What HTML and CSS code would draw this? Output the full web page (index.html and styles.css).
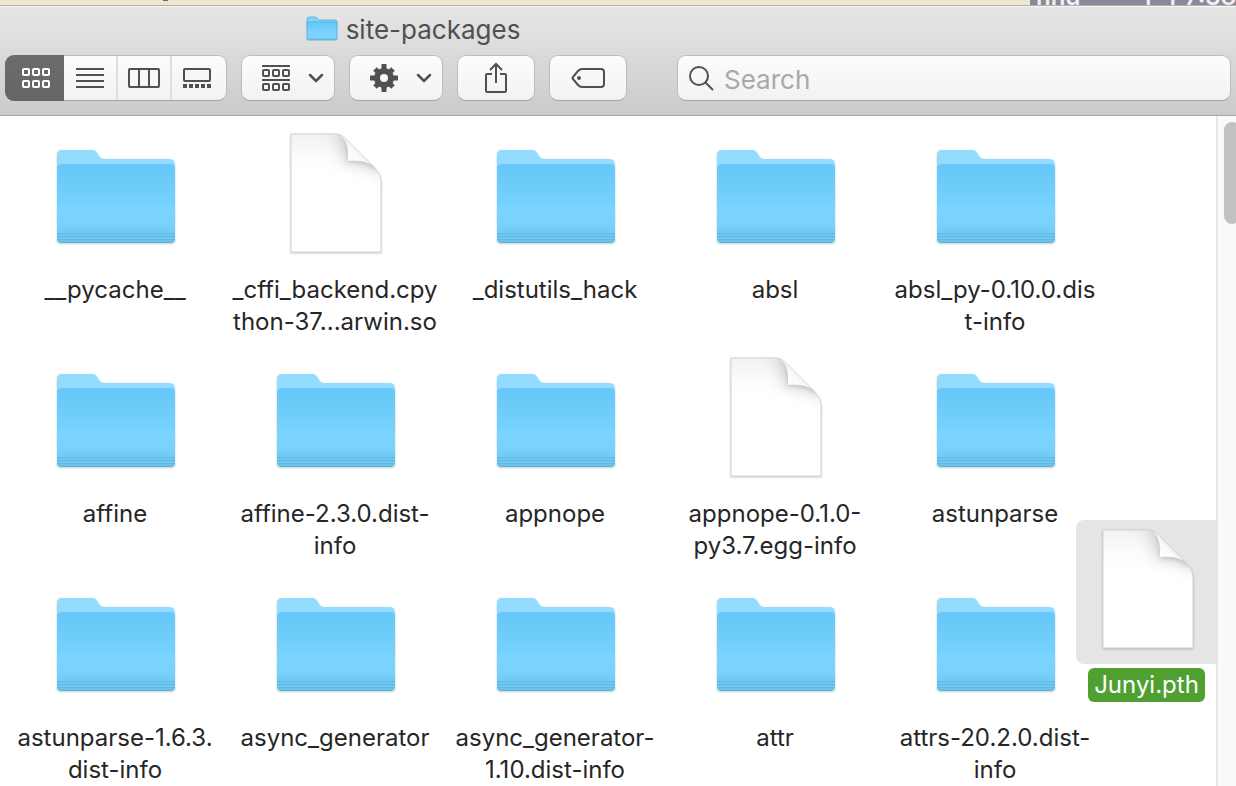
FILE: index.html
```
<!DOCTYPE html>
<html lang="en">
<head>
<meta charset="utf-8">
<title>site-packages</title>
<link rel="stylesheet" href="styles.css">
</head>
<body>
<svg class="defs" aria-hidden="true">
  <defs>
    <linearGradient id="front" x1="0" y1="0" x2="0" y2="1">
      <stop offset="0" stop-color="#64c7f8"/>
      <stop offset=".65" stop-color="#7bd4fd"/>
      <stop offset=".78" stop-color="#79d1fa"/>
      <stop offset=".87" stop-color="#70c9f3"/>
      <stop offset="1" stop-color="#6ac3ed"/>
    </linearGradient>
    <linearGradient id="paper" x1="0" y1="0" x2="0" y2="1">
      <stop offset="0" stop-color="#f1f1f1"/>
      <stop offset=".2" stop-color="#fcfcfc"/>
      <stop offset=".35" stop-color="#fff"/>
    </linearGradient>
    <linearGradient id="curl" gradientUnits="userSpaceOnUse" x1="58" y1="28" x2="71" y2="15">
      <stop offset="0" stop-color="#fff"/>
      <stop offset=".6" stop-color="#fafafa"/>
      <stop offset="1" stop-color="#e4e4e4"/>
    </linearGradient>
    <clipPath id="page-shape"><path d="M1 1h43c6 0 9 2 13 6l25 25c6 6 9 10 9 18v69H1z"/></clipPath>
    <filter id="wide-blur" x="-100%" y="-100%" width="300%" height="300%"><feGaussianBlur stdDeviation="8"/></filter>
    <filter id="near-blur" x="-50%" y="-50%" width="200%" height="200%"><feGaussianBlur stdDeviation="2"/></filter>
  </defs>
  <symbol id="folder" viewBox="0 0 120 96">
    <path d="M1 6q0-5 5-5h31c5 0 5 9 11 9h66q5 0 5 6v30H1z" fill="#93dcff"/>
    <path d="M1 20q0-5 5-5h108q5 0 5 5v70q0 4-4 4H5q-4 0-4-4z" fill="url(#front)"/>
    <path d="M1 84.500h118M1 87.500h118M1 90.500h118" stroke="#5fb9e5" stroke-width="1"/>
    <path d="M4 93.500h112" stroke="#58b0da"/>
  </symbol>
  <symbol id="document" viewBox="0 0 92 120">
    <g clip-path="url(#page-shape)">
      <path d="M0 0h92v120H0z" fill="url(#paper)"/>
      <path d="M38-4c14 4 16 14 17 34 16-2 28 2 40 14V-4z" fill="#b5b5b5" opacity=".7" filter="url(#wide-blur)"/>
      <path d="M50 2c8 5 8 14 8 27 12-1 20 1 29 8V2z" fill="#b0b0b0" opacity=".7" filter="url(#near-blur)"/>
    </g>
    <path d="M1 1h43c6 0 9 2 13 6l25 25c6 6 9 10 9 18v69H1z" fill="none" stroke="#d3d3d3"/>
    <path d="M50 3c8 5 8 12 8 25 10-1 17 0 24 4L57 7q-3-3-7-4z" fill="url(#curl)"/>
  </symbol>
  <symbol id="chevron" viewBox="0 0 16 10"><path d="M2 2l6 6 6-6" fill="none" stroke="#505050" stroke-width="2.500" stroke-linecap="round"/></symbol>
</svg>

<div class="desktop">
  <span class="desktop-mark"></span>
  <div class="desktop-window"><span>hhd</span><span lang="zh">下午7:38</span></div>
</div>

<main class="finder">
  <header class="toolbar">
    <h1 class="title"><svg class="title-icon" viewBox="0 0 32 26">
      <path d="M1 3q0-2 2-2h7l3 3h16q2 0 2 2v5H1z" fill="#82d2f8" stroke="#61b6e3"/>
      <path d="M1 6h30v17q0 1-1 1H2q-1 0-1-1z" fill="url(#front)" stroke="#5cb5e2"/>
      <path d="M2 21h28" stroke="#8ed9fb"/></svg>site-packages</h1>
    <div class="controls">
      <div class="segments" role="group" aria-label="View">
        <button class="segment active" aria-label="Icons"><svg width="28" height="20" viewBox="0 0 28 20" fill="none" stroke="#fff" stroke-width="2"><rect x="1" y="1" width="6" height="6" rx="1"/><rect x="11" y="1" width="6" height="6" rx="1"/><rect x="21" y="1" width="6" height="6" rx="1"/><rect x="1" y="13" width="6" height="6" rx="1"/><rect x="11" y="13" width="6" height="6" rx="1"/><rect x="21" y="13" width="6" height="6" rx="1"/></svg></button>
        <button class="segment" aria-label="List"><svg width="28" height="20" viewBox="0 0 28 20" stroke="#505050" stroke-width="2"><path d="M0 1h28M0 7h28M0 13h28M0 19h28"/></svg></button>
        <button class="segment divided" aria-label="Columns"><svg width="32" height="20" viewBox="0 0 32 20" fill="none" stroke="#505050" stroke-width="2"><rect x="1" y="1" width="30" height="18" rx="1"/><path d="M11 1v18M21 1v18"/></svg></button>
        <button class="segment divided last" aria-label="Gallery"><svg width="28" height="20" viewBox="0 0 28 20" fill="none" stroke="#505050" stroke-width="2"><rect x="1" y="1" width="26" height="12" rx="1"/><path stroke-width="4" d="M0 18h4M6 18h4M12 18h4M18 18h4M24 18h4"/></svg></button>
      </div>
      <button class="tool menu" aria-label="Group by"><svg width="28" height="26" viewBox="0 0 28 26" fill="none" stroke="#505050" stroke-width="2"><path d="M0 1h28M0 15h28"/><rect x="1" y="5" width="6" height="6" rx="1"/><rect x="11" y="5" width="6" height="6" rx="1"/><rect x="21" y="5" width="6" height="6" rx="1"/><rect x="1" y="19" width="6" height="6" rx="1"/><rect x="11" y="19" width="6" height="6" rx="1"/><rect x="21" y="19" width="6" height="6" rx="1"/></svg><svg class="chevron"><use href="#chevron"/></svg></button>
      <button class="tool menu" aria-label="Actions"><svg width="28" height="28" viewBox="-14 -14 28 28"><circle r="7" fill="none" stroke="#505050" stroke-width="6"/><g stroke="#505050" stroke-width="5"><path d="M0-14v5M0 14v-5M-14 0h5M14 0h-5"/><path d="M-9-9l4 4M9-9l-4 4M-9 9l4-4M9 9l-4-4"/></g></svg><svg class="chevron"><use href="#chevron"/></svg></button>
      <button class="tool" aria-label="Share"><svg width="24" height="32" viewBox="0 0 24 32" fill="none" stroke="#505050" stroke-width="2"><path d="M8 12H3q-1 0-1 1v16q0 1 1 1h18q1 0 1-1V13q0-1-1-1h-5M12 21V3M6 8l6-6 6 6"/></svg></button>
      <button class="tool" aria-label="Edit tags"><svg width="34" height="20" viewBox="0 0 34 20"><path d="M11 1h19q3 0 3 3v12q0 3-3 3H11q-2 0-4-2l-5-6q-1-1 0-2l5-6q2-2 4-2z" fill="none" stroke="#505050" stroke-width="2"/><circle cx="8" cy="10" r="2" fill="#505050"/></svg></button>
      <label class="search"><svg width="26" height="26" viewBox="0 0 26 26" fill="none" stroke="#505050" stroke-width="2"><circle cx="11" cy="11" r="9"/><path d="M17 17l8 8"/></svg><input type="search" placeholder="Search" aria-label="Search"></label>
    </div>
  </header>
  <section class="content">
    <ul class="files">
      <li class="file"><svg class="icon folder"><use href="#folder"/></svg><span>__pycache__</span></li>
      <li class="file"><svg class="icon document"><use href="#document"/></svg><span>_cffi_backend.cpy<br>thon-37...arwin.so</span></li>
      <li class="file"><svg class="icon folder"><use href="#folder"/></svg><span>_distutils_hack</span></li>
      <li class="file"><svg class="icon folder"><use href="#folder"/></svg><span>absl</span></li>
      <li class="file"><svg class="icon folder"><use href="#folder"/></svg><span>absl_py-0.10.0.dis<br>t-info</span></li>
      <li class="file"><svg class="icon folder"><use href="#folder"/></svg><span>affine</span></li>
      <li class="file"><svg class="icon folder"><use href="#folder"/></svg><span>affine-2.3.0.dist-<br>info</span></li>
      <li class="file"><svg class="icon folder"><use href="#folder"/></svg><span>appnope</span></li>
      <li class="file"><svg class="icon document"><use href="#document"/></svg><span>appnope-0.1.0-<br>py3.7.egg-info</span></li>
      <li class="file"><svg class="icon folder"><use href="#folder"/></svg><span>astunparse</span></li>
      <li class="file"><svg class="icon folder"><use href="#folder"/></svg><span>astunparse-1.6.3.<br>dist-info</span></li>
      <li class="file"><svg class="icon folder"><use href="#folder"/></svg><span>async_generator</span></li>
      <li class="file"><svg class="icon folder"><use href="#folder"/></svg><span>async_generator-<br>1.10.dist-info</span></li>
      <li class="file"><svg class="icon folder"><use href="#folder"/></svg><span>attr</span></li>
      <li class="file"><svg class="icon folder"><use href="#folder"/></svg><span>attrs-20.2.0.dist-<br>info</span></li>
    </ul>
    <div class="selected-file"><div class="selection"><svg class="icon document"><use href="#document"/></svg></div><span>Junyi.pth</span></div>
    <div class="scrollbar"><div class="thumb"></div></div>
  </section>
</main>
</body>
</html>
```
FILE: styles.css
```
* { box-sizing: border-box; }
body {
  margin: 0;
  height: 100vh;
  display: flex;
  flex-direction: column;
  overflow: hidden;
  background: #fff;
  color: #262626;
  font-family: Inter, "Noto Sans CJK SC", sans-serif;
  font-size: 24px;
}
.defs { position: absolute; width: 0; height: 0; }
.desktop {
  display: flex;
  justify-content: space-between;
  flex: none;
  height: 6px;
  overflow: hidden;
  background: #eee6d2;
  border-bottom: 1px solid #b8b0a2;
}
.desktop-mark { width: 5px; height: 1px; margin-left: 163px; background: #60717a; }
.desktop-window {
  display: flex;
  justify-content: space-between;
  align-items: flex-end;
  width: 206px;
  padding-left: 6px;
  background: #8d8799;
  color: #f2eff4;
  font-weight: 600;
  line-height: 16px;
  white-space: nowrap;
}
.finder { flex: 1; min-height: 0; display: flex; flex-direction: column; }
.toolbar {
  flex: none;
  height: 110px;
  padding: 6px 5px 0;
  background: linear-gradient(#e6e6e6, #cbcbcb);
  border-top: 1px solid #f5f5f5;
  border-bottom: 1px solid #a5a5a5;
}
.title {
  display: flex;
  align-items: center;
  justify-content: center;
  gap: 8px;
  height: 32px;
  margin: 0 410px 10px 0;
  color: #505050;
  font-size: 26px;
  font-weight: 400;
}
.title-icon { width: 32px; height: 26px; }
.controls { display: flex; gap: 14px; height: 48px; }
button { margin: 0; padding: 0; border: 0; background: none; display: flex; align-items: center; justify-content: center; }
.segments, .tool, .search {
  height: 46px;
  border: 1px solid #bdbdbd;
  border-bottom-color: #a4a4a4;
  border-radius: 9px;
  background: linear-gradient(#fcfcfc, #f2f2f2);
}
.segments { display: grid; grid-template-columns: 58px 52px 54px 1fr; width: 222px; }
.segment.divided { border-left: 2px solid #dedede; }
.segment.last { padding-right: 5px; }
.segment.active {
  margin: -1px 0 -1px -1px;
  padding-left: 3px;
  border-radius: 9px 0 0 9px;
  background: linear-gradient(#6c6c6c, #646464);
}
.tool { width: 78px; }
.menu { width: 94px; gap: 18px; padding-left: 10px; }
.chevron { width: 16px; height: 10px; }
.search { flex: 1; display: flex; align-items: center; gap: 10px; margin-left: 36px; padding-left: 10px; }
.search input {
  flex: 1;
  min-width: 0;
  border: 0;
  padding: 2px 0 0;
  outline: 0;
  background: none;
  font: inherit;
  font-size: 26px;
}
.search input::placeholder { color: #a9a9a9; }
.content { flex: 1; min-height: 0; display: flex; position: relative; overflow: hidden; }
.files {
  flex: 1;
  display: grid;
  grid-template-columns: repeat(5, 220px);
  grid-auto-rows: 224px;
  align-content: start;
  margin: 0;
  padding: 15px 0 0 5px;
  list-style: none;
}
.file { display: flex; flex-direction: column; align-items: center; gap: 19px; line-height: 32px; text-align: center; }
.icon { display: block; flex: none; }
.folder { width: 120px; height: 124px; padding: 18px 0 10px; margin-left: 2px; filter: drop-shadow(0 1px 1px #0003); }
.document { width: 92px; height: 120px; margin: 2px 0; filter: drop-shadow(0 1px 1px #0003); }
.file .document { margin-left: 2px; }
.selected-file {
  position: absolute;
  top: 404px;
  right: 19px;
  width: 141px;
  display: flex;
  flex-direction: column;
  align-items: center;
  gap: 4px;
}
.selection {
  width: 100%;
  height: 144px;
  padding: 7px 0 0 26px;
  border-radius: 8px 0 0 8px;
  background: #e5e5e5;
}
.selected-file span { padding: 0 6px; border-radius: 6px; background: #4f9f31; color: #fff; line-height: 34px; }
.scrollbar { width: 20px; padding: 6px 0 0 6px; border-left: 2px solid #e7e7e7; background: #fafafa; overflow: hidden; }
.thumb { width: 16px; height: 102px; border-radius: 8px; background: #c1c1c1; }
```
